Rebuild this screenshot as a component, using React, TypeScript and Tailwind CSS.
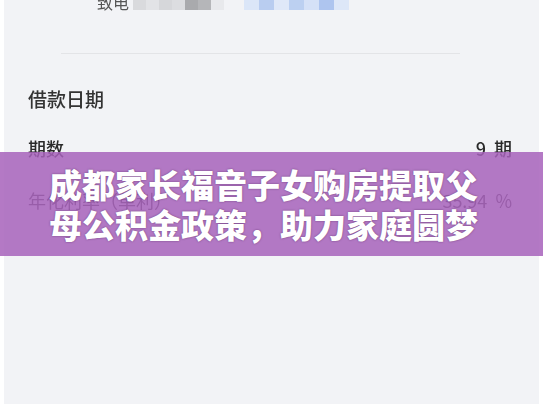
export default function App() {
  const font = { fontFamily: '"Noto Sans CJK SC", "Liberation Sans", sans-serif' };
  const grays = ["#d9dadd", "#e2e3e6", "#d6d7da", "#dcdde0", "#a9aaad", "#b5b6b9", "#e8e9ec"];
  const blues = ["#dbe6f8", "#b9cdf0", "#dfe8f8", "#bcd0f1", "#d5e1f7", "#aec5ef", "#dde7f8"];
  return (
    <div className="relative w-[543px] h-[408px] overflow-hidden bg-white" style={font}>
      <div className="mx-[4px] h-full bg-[#f2f3f6] blur-[0.6px]">
        <div className="flex items-center h-[12px] -mt-[4px] pl-[93px]">
          <span className="text-[16px] leading-none text-[#555]">致电</span>
          <div className="flex ml-[4px] h-[12px] mt-[4px]">
            {grays.map((c, i) => (
              <div key={i} className="w-[13px] h-full" style={{ background: c }} />
            ))}
          </div>
          <div className="flex ml-[20px] h-[12px] mt-[4px]">
            {blues.map((c, i) => (
              <div key={i} className="w-[15px] h-full" style={{ background: c }} />
            ))}
          </div>
        </div>
        <div className="ml-[57px] mr-[79px] mt-[45px] h-px bg-[#e3e4e7]" />
        <div className="pl-[24px] pt-[32px] text-[19px] leading-[26px] font-medium text-[#333]">借款日期</div>
        <div className="flex justify-between pl-[24px] pr-[27px] pt-[24px] text-[18px] leading-[24px] font-medium text-[#2a2a2a]">
          <span>期数</span>
          <span>9&nbsp;&nbsp;期</span>
        </div>
        <div className="flex justify-between pl-[24px] pr-[27px] pt-[28px] text-[18px] leading-[24px] text-[#444]">
          <span>年化利率（单利）</span>
          <span>35.94&nbsp;&nbsp;%</span>
        </div>
      </div>
      <div className="absolute left-0 right-0 top-[152px] h-[104px] bg-[#a762bb]/85 flex flex-col items-center justify-center pr-[16px]">
        <div className="text-white font-black text-[33px] leading-[40px] text-center [text-shadow:0_0_2px_rgba(60,20,70,0.6)]">
          <div>成都家长福音子女购房提取父</div>
          <div>母公积金政策，助力家庭圆梦</div>
        </div>
      </div>
    </div>
  );
}
